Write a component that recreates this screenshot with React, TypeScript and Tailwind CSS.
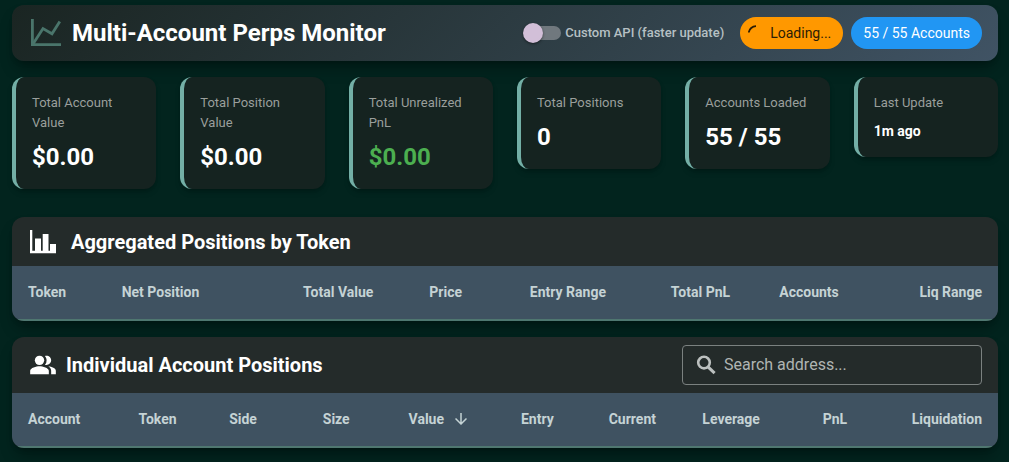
import type { ReactNode } from "react";
import { MdArrowDownward, MdPeopleAlt } from "react-icons/md";

interface Column {
  name: string;
  width: string;
  sorted?: boolean;
}

const stats = [
  { label: "Total Account Value", value: "$0.00", style: "text-2xl/8 text-white" },
  { label: "Total Position Value", value: "$0.00", style: "text-2xl/8 text-white" },
  { label: "Total Unrealized PnL", value: "$0.00", style: "text-2xl/8 text-[#4caf50]" },
  { label: "Total Positions", value: "0", style: "text-2xl/8 text-white" },
  { label: "Accounts Loaded", value: "55 / 55", style: "text-2xl/8 text-white" },
  { label: "Last Update", value: "1m ago", style: "text-sm/5 text-white" },
];

const tokenColumns: Column[] = [
  { name: "Token", width: "w-[9.5%]" },
  { name: "Net Position", width: "w-[18.4%]" },
  { name: "Total Value", width: "w-[12.8%]" },
  { name: "Price", width: "w-[10.2%]" },
  { name: "Entry Range", width: "w-[14.3%]" },
  { name: "Total PnL", width: "w-[11%]" },
  { name: "Accounts", width: "w-[13.9%]" },
  { name: "Liq Range", width: "w-[9.9%]" },
];

const accountColumns: Column[] = [
  { name: "Account", width: "w-[11.2%]" },
  { name: "Token", width: "w-[9.2%]" },
  { name: "Side", width: "w-[9.5%]" },
  { name: "Size", width: "w-[8.7%]" },
  { name: "Value", width: "w-[11.4%]", sorted: true },
  { name: "Entry", width: "w-[8.9%]" },
  { name: "Current", width: "w-[9.5%]" },
  { name: "Leverage", width: "w-[12.2%]" },
  { name: "PnL", width: "w-[8.7%]" },
  { name: "Liquidation", width: "w-[10.7%]" },
];

const LineChartIcon = () => (
  <svg viewBox="0 0 32 28" className="w-8 h-7 text-[#4a756b]" fill="none" stroke="currentColor" strokeWidth="2.8">
    <path d="M2.4 0v25.6H31" />
    <path d="M3 25 13 9.6 22 14.8 29.8 2.6" />
  </svg>
);

const BarChartIcon = () => (
  <svg viewBox="0 0 26 24" className="w-[26px] h-6" fill="currentColor">
    <path d="M0 0h2.3v20.7H5V8.5h6v12.2h1.7V4h5.8v16.7H20V14h6v9.3H0z" />
  </svg>
);

const SearchIcon = () => (
  <svg viewBox="0 0 24 24" className="size-6" fill="none" stroke="currentColor" strokeWidth="2.6">
    <circle cx="10" cy="9.6" r="5.8" />
    <path d="m14 13.8 6.6 6.4" strokeWidth="3" />
  </svg>
);

const PositionsTable = ({ columns }: { columns: Column[] }) => (
  <table className="w-full table-fixed">
    <thead>
      <tr className="h-[54px] bg-[#3f5261] border-b-2 border-[#4f7770]">
        {columns.map((column) => (
          <th
            key={column.name}
            scope="col"
            className={`${column.width} pl-4 pb-[2px] text-left last:pr-4 last:pl-0 last:text-right text-sm/5 font-bold text-[#c5d3d5] whitespace-nowrap`}
          >
            {column.sorted ? (
              <button type="button" className="inline-flex items-center gap-2 align-top">
                {column.name}
                <MdArrowDownward className="size-[18px]" />
              </button>
            ) : (
              column.name
            )}
          </th>
        ))}
      </tr>
    </thead>
  </table>
);

const Panel = ({ children }: { children: ReactNode }) => (
  <section className="rounded-xl overflow-hidden bg-[#242b2a] shadow-lg shadow-black/30">{children}</section>
);

const App = () => {
  return (
    <div className="min-h-screen bg-[#02241e] pl-3 pr-[11px] pt-[5px] pb-3 font-[Roboto,sans-serif] text-white">
      {/* Header */}
      <header className="flex items-center justify-between min-h-14 pl-[18px] pr-4 rounded-xl bg-linear-135 from-[#1a2522] to-[#405364] shadow-lg shadow-black/30">
        <div className="flex items-center gap-[10px]">
          <LineChartIcon />
          <h1 className="text-2xl font-bold">Multi-Account Perps Monitor</h1>
        </div>
        <div className="flex items-center">
          <label className="flex items-center gap-1 mr-4 text-[13px] font-medium text-[#b6c0c4] cursor-pointer">
            <span className="relative flex items-center w-[38px] h-5">
              <input type="checkbox" role="switch" className="peer sr-only" />
              <span className="ml-1 w-[34px] h-[14px] rounded-full bg-[#70787e]" />
              <span className="absolute left-0 top-0 size-5 rounded-full bg-[#d2bfd8] shadow-sm shadow-black/40 transition-transform peer-checked:translate-x-[18px]" />
            </span>
            Custom API (faster update)
          </label>
          <div className="flex gap-2 text-sm">
            <span className="flex items-center gap-[6px] h-8 pl-2 pr-3 rounded-full bg-[#ff9800] text-[#2c1d05]">
              <svg viewBox="0 0 16 16" className="size-4" fill="none" stroke="currentColor" strokeWidth="1.8">
                <path d="M.8 7.5A7.2 7.2 0 0 1 8 1.2" />
              </svg>
              Loading...
            </span>
            <span className="flex items-center h-8 px-3 rounded-full bg-[#2196f3]">55 / 55 Accounts</span>
          </div>
        </div>
      </header>

      {/* Stats */}
      <div className="grid grid-cols-3 sm:grid-cols-6 items-start gap-6 mt-4 min-h-28">
        {stats.map((stat) => (
          <div
            key={stat.label}
            className="p-4 rounded-xl border-l-4 border-[#73afa6] bg-[#152320] shadow-md shadow-black/20"
          >
            <p className="text-[13px]/5 text-[#9a9f9c]">{stat.label}</p>
            <p className={`mt-2 font-bold ${stat.style}`}>{stat.value}</p>
          </div>
        ))}
      </div>

      <div className="flex flex-col gap-4 mt-7">
        {/* Aggregated positions */}
        <Panel>
          <div className="flex items-center gap-[15px] min-h-[49px] px-[18px]">
            <BarChartIcon />
            <h2 className="text-xl font-bold">Aggregated Positions by Token</h2>
          </div>
          <PositionsTable columns={tokenColumns} />
        </Panel>

        {/* Individual positions */}
        <Panel>
          <div className="flex items-center justify-between py-2 pl-[17px] pr-4">
            <div className="flex items-center gap-[9px]">
              <MdPeopleAlt className="size-7" />
              <h2 className="text-xl font-bold">Individual Account Positions</h2>
            </div>
            <label className="flex items-center gap-[6px] w-[300px] h-10 px-[11px] rounded-sm border border-[#7b8180] text-[#bcc0bf]">
              <SearchIcon />
              <input
                type="text"
                aria-label="Search address"
                placeholder="Search address..."
                className="flex-1 min-w-0 bg-transparent outline-none text-base placeholder:text-[#b0b5b3]"
              />
            </label>
          </div>
          <PositionsTable columns={accountColumns} />
        </Panel>
      </div>
    </div>
  );
};

export default App;
